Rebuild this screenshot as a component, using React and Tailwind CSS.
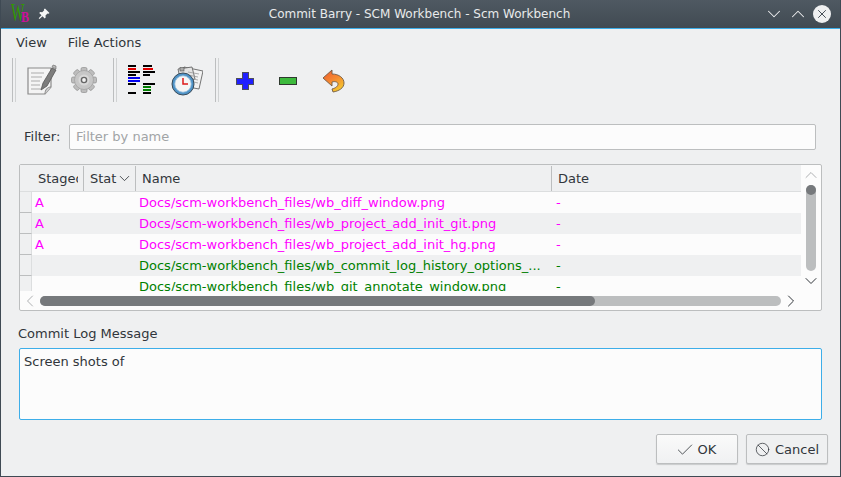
import React from 'react';
import { Check, Ban, ChevronDown, ChevronUp, ChevronLeft, ChevronRight, X } from 'lucide-react';

const rows = [
  { staged: 'A', name: 'Docs/scm-workbench_files/wb_diff_window.png', color: 'text-[#ff00ff]' },
  { staged: 'A', name: 'Docs/scm-workbench_files/wb_project_add_init_git.png', color: 'text-[#ff00ff]' },
  { staged: 'A', name: 'Docs/scm-workbench_files/wb_project_add_init_hg.png', color: 'text-[#ff00ff]' },
  { staged: '', name: 'Docs/scm-workbench_files/wb_commit_log_history_options_...', color: 'text-[#008000]' },
  { staged: '', name: 'Docs/scm-workbench_files/wb_git_annotate_window.png', color: 'text-[#008000]' },
];

const diffBars = [
  [0, 0, 8, '#000'], [15, 0, 9, '#000'],
  [0, 3, 8, '#e00000'], [15, 3, 10, '#e00000'],
  [0, 6, 12, '#000'], [15, 6, 12, '#000'],
  [0, 8.5, 8, '#000'], [15, 8.5, 7, '#000'],
  [0, 12, 12, '#0000f0'], [0, 14.5, 12, '#0000f0'],
  [0, 18, 8, '#000'], [15, 18, 12, '#000'],
  [15, 21, 8, '#008000'], [15, 24, 8, '#008000'],
  [0, 27, 8, '#000'], [15, 27, 8, '#000'],
];

function Separator() {
  return (
    <div className="flex gap-[2px] h-[44px] mx-[1px]">
      <div className="w-[1px] bg-[#bcbebf]" />
      <div className="w-[1px] bg-[#d0d2d3]" />
    </div>
  );
}

function NotesIcon() {
  return (
    <svg width="30" height="32" viewBox="0 0 30 32">
      <path d="M1 4h23v19l-6 7H1z" fill="#f4f4f4" stroke="#8a8a8a" strokeWidth="1.2" />
      <path d="M18 30c0-4 2-7 6-7" fill="#cfcfcf" stroke="#8a8a8a" />
      <path d="M4 9h13M4 13h11M4 17h9M4 21h9M4 25h10" stroke="#c4c4c4" strokeWidth="1.4" />
      <path d="M14 26l2-7 9-15 4 2-9 16z" fill="#7d7d7d" stroke="#555" strokeWidth="0.8" />
      <path d="M25 3l1-2 3 1v3z" fill="#bbb" stroke="#666" strokeWidth="0.6" />
    </svg>
  );
}

function GearIcon() {
  const teeth = [0, 45, 90, 135, 180, 225, 270, 315];
  return (
    <svg width="26" height="26" viewBox="0 0 26 26">
      {teeth.map((a) => (
        <rect key={a} x="10" y="0.5" width="6" height="6" rx="1.5" fill="#bdbdbd" stroke="#8f8f8f" strokeWidth="0.7" transform={`rotate(${a} 13 13)`} />
      ))}
      <circle cx="13" cy="13" r="9.5" fill="#c6c6c6" stroke="#9a9a9a" strokeWidth="0.6" />
      <circle cx="13" cy="13" r="5.5" fill="#d8d8d8" />
      <circle cx="13" cy="13" r="2.6" fill="#f2f2f2" stroke="#666" strokeWidth="1.4" />
    </svg>
  );
}

function DiffIcon() {
  return (
    <svg width="28" height="30" viewBox="0 0 28 30" shapeRendering="crispEdges">
      {diffBars.map(([x, y, w, c], i) => (
        <rect key={i} x={x} y={y} width={w} height="2" fill={c} />
      ))}
    </svg>
  );
}

function HistoryIcon() {
  return (
    <svg width="32" height="32" viewBox="0 0 32 32">
      <path d="M13 3l19 4-4 18-16-3z" fill="#f2f2f2" stroke="#666" strokeWidth="0.9" />
      <path d="M7 5l14-2 3 12-14 4z" fill="#e4e4e4" stroke="#666" strokeWidth="0.9" />
      <path d="M17 8l11 2M17 11l10 2M22 15l5 1M23 18l4 1" stroke="#999" strokeWidth="0.8" />
      <rect x="9" y="3.5" width="4" height="3.5" fill="#aaa" stroke="#555" strokeWidth="0.6" />
      <circle cx="12" cy="20" r="11" fill="#4f93c7" stroke="#3a4a57" strokeWidth="1" />
      <circle cx="12" cy="20" r="8.2" fill="#f5f5f5" stroke="#9cc3df" strokeWidth="0.8" />
      <path d="M12 14v6h5" fill="none" stroke="#dd1a1a" strokeWidth="1.5" />
    </svg>
  );
}

function PlusIcon() {
  return (
    <svg width="18" height="18" viewBox="0 0 18 18" shapeRendering="crispEdges">
      <path d="M6 0.500h6v5.500h5.500v6h-5.500v5.500h-6v-5.500h-5.500v-6h5.500z" fill="#1f1fff" stroke="#4d4d5c" />
    </svg>
  );
}

function MinusIcon() {
  return (
    <svg width="18" height="8" viewBox="0 0 18 8" shapeRendering="crispEdges">
      <rect x="0.5" y="0.5" width="17" height="7" fill="#3dba3d" stroke="#2f3a2f" />
    </svg>
  );
}

function UndoIcon() {
  return (
    <svg width="24" height="24" viewBox="0 0 24 24">
      <defs>
        <linearGradient id="undoFill" x1="0" y1="0" x2="0.6" y2="1">
          <stop offset="0" stopColor="#f0562e" />
          <stop offset="0.55" stopColor="#f58a30" />
          <stop offset="1" stopColor="#f5c530" />
        </linearGradient>
      </defs>
      <path d="M1 9L10 1V5C17 5 22 9 22 14C22 19 17 22 11 23L10 20C14 19 16 17 16 15C16 13 13 12 10 13V17Z" fill="url(#undoFill)" stroke="#6f5a44" strokeWidth="0.9" strokeLinejoin="round" />
    </svg>
  );
}

function PinIcon() {
  return (
    <svg width="12" height="12" viewBox="0 0 12 12">
      <path d="M7 0.500l4.500 4.500-1 0.800-1-0.300-2 2 0.200 2-1 1-2.200-2.300-3 2.800-0.800-0.800 2.800-3-2.300-2.200 1-1 2 0.200 2-2-0.300-1z" fill="#f5f6f6" />
    </svg>
  );
}

function Logo() {
  return (
    <div className="flex w-[22px] h-[22px] font-['Liberation_Serif',serif] leading-none select-none">
      <span className="text-[26px] text-[#2f9a00] scale-x-[0.55] origin-left w-[10px] -mt-[3px]">W</span>
      <span className="text-[15px] text-[#d0109a] scale-x-[0.8] origin-left mt-[7px] font-bold">B</span>
    </div>
  );
}

export default function App() {
  return (
    <div className="w-[841px] h-[477px] flex flex-col overflow-hidden bg-[#eff0f1] border-x border-b border-[#3f4a54] font-['DejaVu_Sans',sans-serif] text-[13px] text-[#31363b]">
      {/* Title bar */}
      <div className="h-[28px] shrink-0 flex items-center bg-gradient-to-b from-[#4f5962] to-[#414a52] pl-[10px] pr-[9px]">
        <Logo />
        <div className="ml-[5px]">
          <PinIcon />
        </div>
        <div className="flex-1 pl-[26px] text-center text-[12px] text-[#e8eaeb]">Commit Barry - SCM Workbench - Scm Workbench</div>
        <div className="flex items-center gap-[2px]">
          <ChevronDown size={22} strokeWidth={1.1} className="text-[#f0f1f2]" />
          <ChevronUp size={22} strokeWidth={1.1} className="text-[#f0f1f2]" />
          <div className="w-[18px] h-[18px] ml-[2px] rounded-full bg-[#eff0f1] flex items-center justify-center">
            <X size={14} strokeWidth={1.6} className="text-[#3b444c]" />
          </div>
        </div>
      </div>
      <div className="h-[1px] shrink-0 bg-[#3daee9]" />

      {/* Menu */}
      <div className="h-[26px] shrink-0 flex items-center gap-[21px] pl-[15px] pt-[1px]">
        <span>View</span>
        <span>File Actions</span>
      </div>

      {/* Toolbar */}
      <div className="h-[48px] shrink-0 flex items-center pl-[10px] pt-[2px]">
        <Separator />
        <div className="ml-[10px]"><NotesIcon /></div>
        <div className="ml-[14px]"><GearIcon /></div>
        <div className="ml-[15px]"><Separator /></div>
        <div className="ml-[10px]"><DiffIcon /></div>
        <div className="ml-[15px]"><HistoryIcon /></div>
        <div className="ml-[11px]"><Separator /></div>
        <div className="ml-[16px] mt-[2px]"><PlusIcon /></div>
        <div className="ml-[25px] mt-[2px]"><MinusIcon /></div>
        <div className="ml-[25px] mt-[2px]"><UndoIcon /></div>
      </div>

      {/* Filter */}
      <div className="flex items-center shrink-0 mt-[21px] pl-[23px] pr-[24px]">
        <span className="w-[45px]">Filter:</span>
        <div className="flex-1 h-[26px] flex items-center px-[6px] rounded-[2px] bg-[#fcfcfc] border border-[#bcbebf] text-[#a1a4a6]">
          Filter by name
        </div>
      </div>

      {/* Table */}
      <div className="shrink-0 mt-[14px] ml-[18px] w-[803px] h-[147px] flex flex-col rounded-[2px] border border-[#bcbebf] bg-[#fcfcfc]">
        <div className="flex h-[126px]">
          <div className="w-[782px] overflow-hidden">
            <div className="flex h-[27px] pt-[1px] bg-[#eff0f1] border-b border-[#dcdedf]">
              <div className="w-[12px]" />
              <div className="w-[52px] pl-[6px] flex items-center border-r border-[#bcbebf]">
                <div className="w-[40px] overflow-hidden whitespace-nowrap">Staged</div>
              </div>
              <div className="w-[52px] pl-[6px] flex items-center border-r border-[#bcbebf]">
                Stat
                <ChevronDown size={17} strokeWidth={1.2} />
              </div>
              <div className="w-[416px] pl-[6px] flex items-center border-r border-[#bcbebf]">Name</div>
              <div className="flex-1 pl-[6px] flex items-center">Date</div>
            </div>
            {rows.map((row, i) => (
              <div key={row.name} className={`flex h-[21px] shrink-0 ${row.color}`}>
                <div className="w-[12px] bg-[#eff0f1] border-r border-b border-r-[#dcdedf] border-b-[#bcbebf]" />
                <div className={`flex flex-1 items-center ${i % 2 === 1 ? 'bg-[#eff0f1]' : 'bg-[#fcfcfc]'}`}>
                  <div className="w-[104px] pl-[3px]">{row.staged}</div>
                  <div className="w-[416px] pl-[3px] whitespace-nowrap">{row.name}</div>
                  <div className="flex-1 pl-[4px]">-</div>
                </div>
              </div>
            ))}
          </div>
          {/* Vertical scrollbar */}
          <div className="flex-1 flex flex-col items-center">
            <ChevronUp size={20} strokeWidth={1.1} className="text-[#a6a9ab]" />
            <div className="w-[10px] h-[86px] rounded-full bg-[#bcbebf]">
              <div className="w-[10px] h-[10px] rounded-full bg-[#76797c]" />
            </div>
            <ChevronDown size={20} strokeWidth={1.2} className="text-[#31363b]" />
          </div>
        </div>
        {/* Horizontal scrollbar */}
        <div className="flex items-center h-[19px] pt-[1px]">
          <ChevronLeft size={20} strokeWidth={1.1} className="text-[#a6a9ab]" />
          <div className="w-[741px] h-[10px] rounded-full bg-[#bcbebf]">
            <div className="w-[555px] h-[10px] rounded-full bg-[#76797c]" />
          </div>
          <ChevronRight size={20} strokeWidth={1.2} />
        </div>
      </div>

      {/* Commit message */}
      <div className="shrink-0 mt-[15px] pl-[17px] leading-[16px]">Commit Log Message</div>
      <div className="shrink-0 mt-[6px] ml-[18px] w-[803px] h-[72px] px-[4px] pt-[3px] rounded-[2px] bg-[#fcfcfc] border border-[#3daee9]">
        Screen shots of
      </div>

      {/* Buttons */}
      <div className="flex justify-end gap-[8px] mt-[14px] pr-[12px]">
        <div className="w-[82px] h-[30px] flex items-center justify-center gap-[3px] pr-[3px] pt-[1px] rounded-[2px] border border-[#bcbebf] bg-gradient-to-b from-[#fafafa] to-[#f0f1f2] shadow-[0_1px_1px_#c8cacb]">
          <Check size={20} strokeWidth={1} />
          <span>OK</span>
        </div>
        <div className="w-[82px] h-[30px] flex items-center justify-center gap-[5px] pt-[1px] rounded-[2px] border border-[#bcbebf] bg-[#eff0f1] shadow-[0_1px_1px_#c8cacb]">
          <Ban size={15} strokeWidth={1.2} />
          <span>Cancel</span>
        </div>
      </div>
    </div>
  );
}
